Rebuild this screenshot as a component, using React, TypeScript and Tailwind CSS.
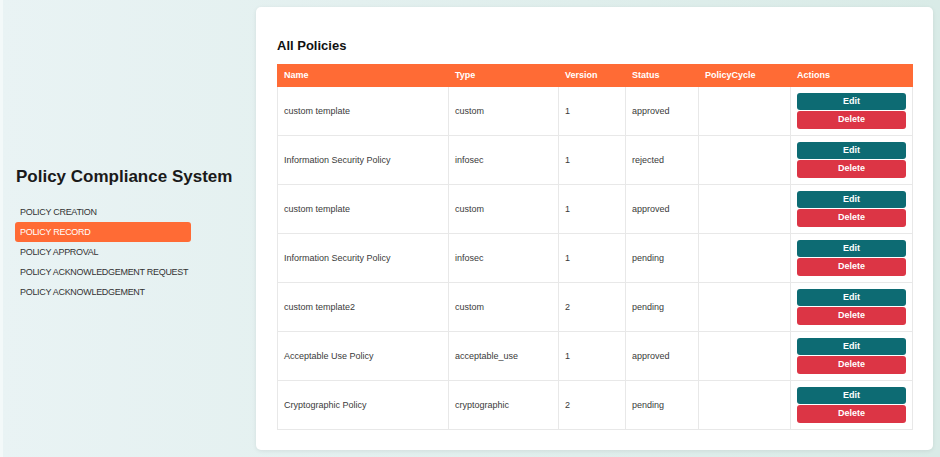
import React from 'react';

const policies = [
  { name: 'custom template', type: 'custom', version: 1, status: 'approved' },
  { name: 'Information Security Policy', type: 'infosec', version: 1, status: 'rejected' },
  { name: 'custom template', type: 'custom', version: 1, status: 'approved' },
  { name: 'Information Security Policy', type: 'infosec', version: 1, status: 'pending' },
  { name: 'custom template2', type: 'custom', version: 2, status: 'pending' },
  { name: 'Acceptable Use Policy', type: 'acceptable_use', version: 1, status: 'approved' },
  { name: 'Cryptographic Policy', type: 'cryptographic', version: 2, status: 'pending' },
];

const navItems = [
  'POLICY CREATION',
  'POLICY RECORD',
  'POLICY APPROVAL',
  'POLICY ACKNOWLEDGEMENT REQUEST',
  'POLICY ACKNOWLEDGEMENT',
];

const Sidebar = () => (
  <aside className="w-[256px] shrink-0 pl-[15px] pr-[10px] pt-[166px]">
    <h1 className="pl-px text-[17px] font-bold leading-[22px] text-[#1a1a1a]">Policy Compliance System</h1>
    <nav className="mt-[14px] flex flex-col">
      {navItems.map((item) => (
        <div
          key={item}
          className={`h-[20px] w-[176px] whitespace-nowrap rounded-[3px] pl-[5px] text-[9px] leading-[20px] tracking-[-0.3px] ${
            item === 'POLICY RECORD' ? 'bg-[#ff6b35] text-white' : 'text-[#333333]'
          }`}
        >
          {item}
        </div>
      ))}
    </nav>
  </aside>
);

const th = 'border border-[#ff6b35] px-[6px] text-left font-bold text-white';
const td = 'border border-[#e8e8e8] px-[6px] pt-px text-[#3a3a3a]';

const PolicyTable = () => (
  <table className="w-[635px] table-fixed border-collapse text-[9px]">
    <colgroup>
      <col className="w-[171px]" />
      <col className="w-[110px]" />
      <col className="w-[67px]" />
      <col className="w-[73px]" />
      <col className="w-[92px]" />
      <col className="w-[122px]" />
    </colgroup>
    <thead>
      <tr className="h-[22px] bg-[#ff6b35]">
        <th className={th}>Name</th>
        <th className={`${th} border-l-[#ff8a5e]`}>Type</th>
        <th className={`${th} border-l-[#ff8a5e]`}>Version</th>
        <th className={`${th} border-l-[#ff8a5e]`}>Status</th>
        <th className={`${th} border-l-[#ff8a5e]`}>PolicyCycle</th>
        <th className={`${th} border-l-[#ff8a5e]`}>Actions</th>
      </tr>
    </thead>
    <tbody>
      {policies.map((p, i) => (
        <tr key={i} className="h-[49px]">
          <td className={td}>{p.name}</td>
          <td className={td}>{p.type}</td>
          <td className={td}>{p.version}</td>
          <td className={td}>{p.status}</td>
          <td className={td}></td>
          <td className="border border-[#e8e8e8] px-[6px]">
            <div className="flex flex-col gap-px">
              <button className="h-[17px] w-full rounded-[3px] bg-[#0d6b73] text-[9px] font-bold text-white">
                Edit
              </button>
              <button className="h-[18px] w-full rounded-[3px] bg-[#dc3545] text-[9px] font-bold text-white">
                Delete
              </button>
            </div>
          </td>
        </tr>
      ))}
    </tbody>
  </table>
);

export default function App() {
  return (
    <div
      className="flex h-[457px] w-[940px] overflow-hidden bg-gradient-to-r from-[#e9f3f4] to-[#d9ebe7] shadow-[inset_3px_0_0_#f3f9f9]"
      style={{ fontFamily: '"Liberation Sans", Arial, sans-serif' }}
    >
      <Sidebar />
      <main className="mt-[7px] h-[443px] w-[677px] rounded-[5px] bg-white px-[21px] pt-[31px] shadow-[0_1px_4px_rgba(0,0,0,0.08)]">
        <h2 className="mb-[10px] text-[13px] font-bold leading-[16px] text-[#111111]">All Policies</h2>
        <PolicyTable />
      </main>
    </div>
  );
}
